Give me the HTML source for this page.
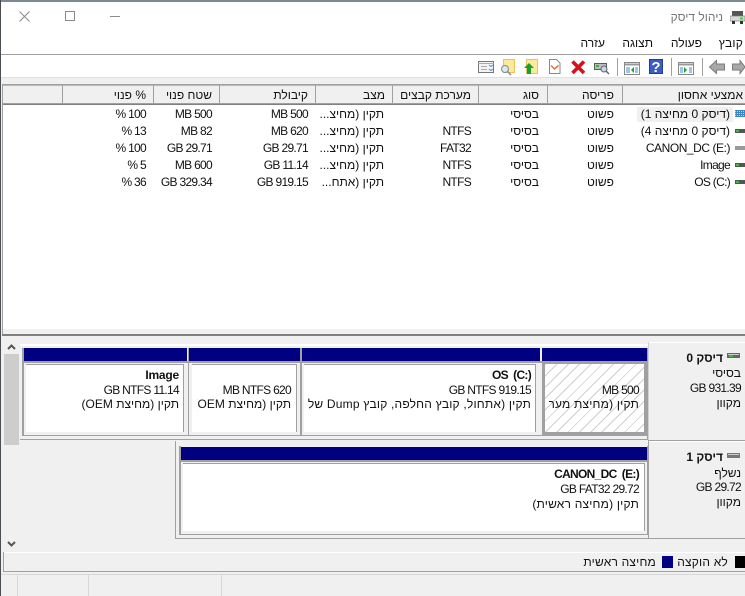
<!DOCTYPE html>
<html lang="he"><head><meta charset="utf-8"><title>ניהול דיסק</title>
<style>
html,body{margin:0;padding:0}
body{width:745px;height:596px;overflow:hidden;position:relative;background:#f0f0f0;font:12px/14px "Liberation Sans","Noto Sans CJK SC",sans-serif;color:#111}
div,span.t,svg{position:absolute}
.t{position:absolute;white-space:nowrap;direction:rtl;height:14px;line-height:14px}
.b{font-weight:bold}
.l{letter-spacing:-.7px}
.m{letter-spacing:.2px}
.h{position:absolute;top:85px;background:#f0f0f0;border:1px solid #a0a0a0;border-top-color:#b8b8b8;box-sizing:border-box;height:19px}
.n{background:#000080;height:13px}
.w{background:#fff}
.g{background:#a0a0a0}
.f{background:#fff;border-top:1px solid #a0a0a0;border-right:1px solid #a0a0a0;box-sizing:border-box}
.c{overflow:hidden;height:14px;position:absolute}
.c .t{right:0;top:0}
</style></head><body>
<!-- window chrome -->
<div style="left:0;top:0;width:745px;height:2px;background:#7b8a8f"></div>
<div class="w" style="left:1px;top:2px;width:744px;height:52px"></div>
<div style="left:1px;top:54px;width:744px;height:1px;background:#a0a0a0"></div>
<div class="w" style="left:1px;top:55px;width:744px;height:22px"></div>
<div style="left:1px;top:77px;width:744px;height:7px;background:#f0f0f0;border-top:1px solid #e0e0e0;box-sizing:border-box"></div>
<div style="left:2px;top:84px;width:743px;height:1px;background:#a0a0a0"></div>
<div class="w" style="left:3px;top:85px;width:742px;height:244px"></div>
<svg style="left:0;top:0" width="120" height="30"><path d="M19.500 11.500L29.500 21.500M29.500 11.500L19.500 21.500" stroke="#8a8a8a" fill="none"/><rect x="65.500" y="11.500" width="9" height="9" fill="none" stroke="#8a8a8a"/><path d="M110 16.500H120" stroke="#8a8a8a"/></svg>
<span class="t" style="right:22px;top:10px;color:#777">ניהול דיסק</span>
<svg style="left:730px;top:11px" width="15" height="13"><rect x="2" y="0" width="11" height="5" fill="#555"/><rect x="0" y="5" width="15" height="5" fill="#d8d8d8" stroke="#777" stroke-width=".6"/><rect x="10" y="6.500" width="3" height="2" fill="#3ecf3e"/><rect x="2" y="10" width="3" height="3" fill="#333"/><rect x="10" y="10" width="3" height="3" fill="#333"/></svg>
<span class="t m" style="right:2px;top:36px">קובץ</span>
<span class="t" style="right:43px;top:36px">פעולה</span>
<span class="t" style="right:92px;top:36px">תצוגה</span>
<span class="t" style="right:140px;top:36px">עזרה</span>
<!-- toolbar -->
<svg style="left:470px;top:55px" width="275" height="23" viewBox="470 55 275 23">
<g><rect x="478.500" y="61.500" width="15" height="11" fill="#f4f4f4" stroke="#777"/><path d="M478 63.500h16" stroke="#aaa"/><path d="M481 66.500h6M481 69.500h6" stroke="#aaa"/><path d="M489 65l2 1.500 2-1.500M489 69l2 1.500 2-1.500" stroke="#3a8fd8" fill="none"/></g>
<g><rect x="503.500" y="59.500" width="11" height="13" fill="#fde99c" stroke="#e6c65c"/><circle cx="505" cy="69" r="3.500" fill="#dbe8f2" stroke="#7d8a96"/><path d="M507.500 71.500L511 75" stroke="#7d8a96" stroke-width="1.500"/></g>
<g><rect x="526.500" y="59.500" width="11" height="14" fill="#fde99c" stroke="#e6c65c"/><path d="M529 63l5 5h-3v6h-4v-6h-3z" fill="#18a030"/></g>
<g><path d="M549.500 59.500h7l3.500 3.500v10.500h-10.500z" fill="#fff" stroke="#888"/><path d="M551 65.500l3.500 3.500 4-3.500" stroke="#e8703c" stroke-width="1.500" fill="none"/></g>
<path d="M572.500 61.500L584 73M584 61.500L572.500 73" stroke="#d8101c" stroke-width="3.600"/>
<g><rect x="594.500" y="63.500" width="12" height="6" fill="#bdbdbd" stroke="#5a5a5a"/><rect x="596" y="65" width="3" height="2" fill="#2db82d"/><circle cx="604" cy="69" r="3" fill="#c5d8e6" stroke="#667"/><path d="M606 71L609 74" stroke="#667" stroke-width="1.500"/></g>
<path d="M617.500 58v18M671.500 58v18M702.500 58v18" stroke="#a0a0a0"/>
<g><rect x="624.500" y="62.500" width="15" height="12" fill="#fff" stroke="#888"/><path d="M625 64.500h14" stroke="#999" stroke-width="2"/><path d="M626 68h4M626 70h4M626 72h4M635 68h3M635 70h3M635 72h3" stroke="#3a8fd8"/><path d="M634 67v6l-3-3z" fill="#18a030"/></g>
<g><rect x="649" y="59" width="14" height="15" fill="#3b5cc4"/><rect x="649.500" y="59.500" width="13" height="14" fill="none" stroke="#2a3f8c"/><text x="656" y="72" font-family="Liberation Sans" font-weight="bold" font-size="15" fill="#fff" text-anchor="middle">?</text></g>
<g><rect x="678.500" y="62.500" width="15" height="12" fill="#fff" stroke="#888"/><path d="M679 64.500h14" stroke="#999" stroke-width="2"/><path d="M680 68h3M680 70h3M680 72h3M689 68h3M689 70h3M689 72h3" stroke="#3a8fd8"/><path d="M684 67v6l3-3z" fill="#18a030"/></g>
<path d="M709.500 67l7-6.500v3.500h8v6h-8v3.500z" fill="#a8a8a8" stroke="#7b7b7b"/>
<path d="M745 67l-5-6.500v3.500h-7.500v6h7.500v3.500z" fill="#a8a8a8" stroke="#7b7b7b"/>
</svg>
<!-- list header -->
<div class="h" style="left:2px;width:61px"></div>
<div class="h" style="left:62px;width:92px"></div>
<div class="h" style="left:153px;width:67px"></div>
<div class="h" style="left:219px;width:97px"></div>
<div class="h" style="left:315px;width:78px"></div>
<div class="h" style="left:392px;width:87px"></div>
<div class="h" style="left:478px;width:70px"></div>
<div class="h" style="left:547px;width:76px"></div>
<div class="h" style="left:622px;width:124px"></div>
<div style="left:2px;top:104px;width:743px;height:1px;background:#808080"></div>
<span class="t" style="right:599px;top:88px">% פנוי</span>
<span class="t" style="right:533px;top:88px">שטח פנוי</span>
<span class="t" style="right:437px;top:88px">קיבולת</span>
<span class="t" style="right:360px;top:88px">מצב</span>
<span class="t" style="right:274px;top:88px">מערכת קבצים</span>
<span class="t" style="right:206px;top:88px">סוג</span>
<span class="t" style="right:131px;top:88px">פריסה</span>
<span class="t" style="right:2px;top:88px">אמצעי אחסון</span>
<!-- rows -->
<div style="left:637px;top:107px;width:96px;height:15px;background:#f0f0f0"></div>
<svg style="left:735px;top:108px" width="10" height="80"><rect x="0" y="2" width="10" height="7" fill="#3a86c8"/><path d="M0 3.500h10M0 5.500h10M0 7.500h10" stroke="#bcd8ee" stroke-dasharray="1 1"/>
<rect x="0" y="21" width="10" height="4" fill="#555"/><rect x="1" y="22" width="3" height="2" fill="#35c035"/>
<rect x="0" y="38" width="10" height="4" fill="#9a9a9a"/>
<rect x="0" y="55" width="10" height="4" fill="#555"/><rect x="1" y="56" width="3" height="2" fill="#35c035"/>
<rect x="0" y="72" width="10" height="4" fill="#555"/><rect x="1" y="73" width="3" height="2" fill="#35c035"/></svg>
<span class="t" style="right:15px;top:107px">(דיסק 0 מחיצה 1)</span>
<span class="t" style="right:15px;top:124px">(דיסק 0 מחיצה 4)</span>
<span class="t l" style="right:15px;top:141px;letter-spacing:-.45px">CANON_DC (E:)</span>
<span class="t l" style="right:15px;top:158px">Image</span>
<span class="t l" style="right:15px;top:175px">OS (C:)</span>
<span class="t" style="right:131px;top:107px">פשוט</span><span class="t" style="right:206px;top:107px">בסיסי</span>
<span class="t" style="right:131px;top:124px">פשוט</span><span class="t" style="right:206px;top:124px">בסיסי</span><span class="t l" style="right:274px;top:124px">NTFS</span>
<span class="t" style="right:131px;top:141px">פשוט</span><span class="t" style="right:206px;top:141px">בסיסי</span><span class="t l" style="right:274px;top:141px">FAT32</span>
<span class="t" style="right:131px;top:158px">פשוט</span><span class="t" style="right:206px;top:158px">בסיסי</span><span class="t l" style="right:274px;top:158px">NTFS</span>
<span class="t" style="right:131px;top:175px">פשוט</span><span class="t" style="right:206px;top:175px">בסיסי</span><span class="t l" style="right:274px;top:175px">NTFS</span>
<span class="t" style="right:361px;top:107px">תקין (מחיצ...</span><span class="t l" style="right:437px;top:107px">500 MB</span><span class="t l" style="right:533px;top:107px">500 MB</span><span class="t l" style="right:599px;top:107px">100 %</span>
<span class="t" style="right:361px;top:124px">תקין (מחיצ...</span><span class="t l" style="right:437px;top:124px">620 MB</span><span class="t l" style="right:533px;top:124px">82 MB</span><span class="t l" style="right:599px;top:124px">13 %</span>
<span class="t" style="right:361px;top:141px">תקין (מחיצ...</span><span class="t l" style="right:437px;top:141px">29.71 GB</span><span class="t l" style="right:533px;top:141px">29.71 GB</span><span class="t l" style="right:599px;top:141px">100 %</span>
<span class="t" style="right:361px;top:158px">תקין (מחיצ...</span><span class="t l" style="right:437px;top:158px">11.14 GB</span><span class="t l" style="right:533px;top:158px">600 MB</span><span class="t l" style="right:599px;top:158px">5 %</span>
<span class="t" style="right:361px;top:175px">תקין (אתח...</span><span class="t l" style="right:437px;top:175px">919.15 GB</span><span class="t l" style="right:533px;top:175px">329.34 GB</span><span class="t l" style="right:599px;top:175px">36 %</span>
<!-- splitter -->
<div style="left:2px;top:85px;width:1px;height:251px;background:#a0a0a0"></div>
<div style="left:2px;top:334px;width:743px;height:2px;background:#808080"></div>
<!-- scrollbar -->
<svg style="left:4px;top:338px" width="16" height="212"><path d="M4 11l3.500-3.500L11 11" stroke="#555" stroke-width="2" fill="none"/><path d="M4 204l3.500 3.500L11 204" stroke="#555" stroke-width="2" fill="none"/></svg>
<div style="left:4px;top:354px;width:15px;height:91px;background:#cdcdcd"></div>
<!-- disk 0 -->
<div style="left:20px;top:344px;width:628px;height:2px;background:#fff"></div>
<div style="left:22px;top:348px;width:2px;height:88px;background:#a0a0a0"></div>
<div style="left:22px;top:361px;width:626px;height:2px;background:#a0a0a0"></div>
<div style="left:22px;top:435px;width:626px;height:1px;background:#a0a0a0"></div>
<div style="left:20px;top:439px;width:628px;height:1px;background:#a0a0a0"></div>
<div style="left:647px;top:348px;width:1px;height:92px;background:#a0a0a0"></div>
<div class="n" style="left:24px;top:348px;width:163px"></div>
<div class="n" style="left:189px;top:348px;width:111px"></div>
<div class="n" style="left:302px;top:348px;width:238px"></div>
<div class="n" style="left:542px;top:348px;width:105px"></div>
<div style="left:188px;top:348px;width:1px;height:88px;background:#a0a0a0"></div>
<div style="left:300px;top:348px;width:2px;height:88px;background:#a0a0a0"></div>
<div class="f" style="left:26px;top:364px;width:158px;height:68px"></div>
<div class="f" style="left:192px;top:364px;width:105px;height:68px"></div>
<div class="f" style="left:304px;top:364px;width:232px;height:68px"></div>
<span class="t b l" style="right:566px;top:368px;letter-spacing:-.2px">Image</span>
<span class="t l" style="right:566px;top:383px">11.14 GB NTFS</span>
<span class="t" style="right:566px;top:397px">תקין (מחיצת OEM)</span>
<span class="t l" style="right:454px;top:383px">620 MB NTFS</span>
<div class="c" style="left:197px;top:397px;width:94px"><span class="t">תקין (מחיצת OEM)</span></div>
<span class="t b l" style="right:214px;top:368px">OS&nbsp; (C:)</span>
<span class="t l" style="right:214px;top:383px">919.15 GB NTFS</span>
<span class="t m" style="right:214px;top:397px">תקין (אתחול, קובץ החלפה, קובץ Dump של</span>
<div style="left:542px;top:361px;width:105px;height:75px;background:#a0a0a0"></div>
<div style="left:545px;top:364px;width:99px;height:68px;background:#fff repeating-linear-gradient(135deg,#cfcfcf 0,#cfcfcf 1px,#fff 1px,#fff 8px)"></div>
<span class="t l" style="right:106px;top:383px">500 MB</span>
<div class="c" style="left:549px;top:397px;width:90px"><span class="t m">תקין (מחיצת מערכת)</span></div>
<!-- disk labels -->
<div style="left:648px;top:342px;width:1px;height:197px;background:#d0d0d0"></div>
<div style="left:649px;top:342px;width:96px;height:1px;background:#fff"></div>
<div style="left:648px;top:440px;width:97px;height:1px;background:#a0a0a0"></div>
<div style="left:649px;top:441px;width:96px;height:1px;background:#fff"></div>
<svg style="left:727px;top:352px" width="14" height="8"><rect x="0" y="1" width="13" height="5" fill="#666"/><rect x="1" y="2" width="11" height="1" fill="#ccc"/><rect x="2" y="3" width="4" height="2" fill="#35c035"/></svg>
<span class="t b" style="right:22px;top:351px">דיסק 0</span>
<span class="t" style="right:4px;top:366px">בסיסי</span>
<span class="t l" style="right:4px;top:381px">931.39 GB</span>
<span class="t" style="right:4px;top:396px">מקוון</span>
<!-- disk 1 -->
<div style="left:175px;top:441px;width:1px;height:98px;background:#a0a0a0"></div>
<div style="left:175px;top:538px;width:570px;height:1px;background:#a0a0a0"></div>
<div style="left:179px;top:446px;width:469px;height:89px;background:#f0f0f0;border-left:2px solid #a0a0a0;border-right:1px solid #a0a0a0;border-bottom:1px solid #a0a0a0;box-sizing:border-box"></div>
<div class="n" style="left:181px;top:447px;width:466px"></div>
<div style="left:181px;top:460px;width:466px;height:2px;background:#a0a0a0"></div>
<div class="f" style="left:183px;top:463px;width:462px;height:68px"></div>
<div style="left:648px;top:441px;width:1px;height:98px;background:#a0a0a0"></div>
<span class="t b l" style="right:106px;top:467px">CANON_DC&nbsp; (E:)</span>
<span class="t l" style="right:106px;top:482px">29.72 GB FAT32</span>
<span class="t m" style="right:106px;top:497px">תקין (מחיצה ראשית)</span>
<svg style="left:727px;top:452px" width="14" height="8"><rect x="0" y="1" width="13" height="5" fill="#777"/><rect x="1" y="2" width="11" height="1" fill="#ccc"/></svg>
<span class="t b" style="right:22px;top:450px">דיסק 1</span>
<span class="t" style="right:4px;top:466px">נשלף</span>
<span class="t l" style="right:4px;top:480px">29.72 GB</span>
<span class="t" style="right:4px;top:495px">מקוון</span>
<!-- legend -->
<div style="left:3px;top:552px;width:742px;height:1px;background:#fff"></div>
<div style="left:3px;top:552px;width:1px;height:20px;background:#a0a0a0"></div>
<div style="left:3px;top:571px;width:742px;height:1px;background:#a0a0a0"></div>
<div style="left:735px;top:556px;width:10px;height:12px;background:#000"></div>
<span class="t m" style="right:17px;top:555px">לא הוקצה</span>
<div style="left:662px;top:556px;width:11px;height:12px;background:#000080"></div>
<span class="t m" style="right:89px;top:555px">מחיצה ראשית</span>
<!-- status bar -->
<div style="left:1px;top:574px;width:744px;height:1px;background:#d8d8d8"></div>
<div style="left:17px;top:575px;width:1px;height:21px;background:#d8d8d8"></div>
<div style="left:88px;top:575px;width:1px;height:21px;background:#d8d8d8"></div>
<div style="left:221px;top:575px;width:1px;height:21px;background:#d8d8d8"></div>
<!-- left edge -->
<div style="left:0;top:0;width:1px;height:596px;background:#4a4f54"></div>
</body></html>
